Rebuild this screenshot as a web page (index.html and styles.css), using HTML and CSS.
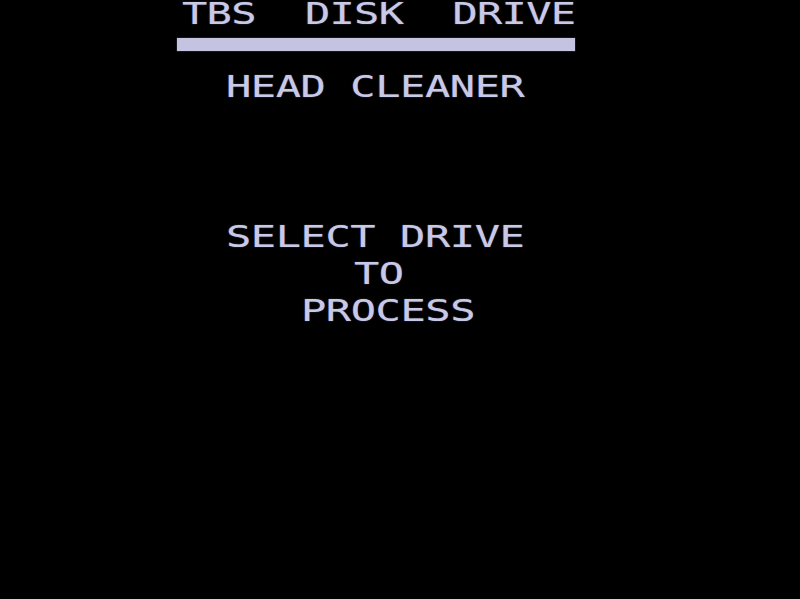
FILE: index.html
```html
<!DOCTYPE html>
<html>
<head>
<meta charset="utf-8">
<link rel="stylesheet" href="styles.css">
</head>
<body>
<div class="screen">
  <div class="line title"><span class="txt">TBS  DISK  DRIVE</span></div>
  <div class="bar"></div>
  <div class="line row head"><span class="txt">HEAD CLEANER</span></div>
  <div class="line row select"><span class="txt">SELECT DRIVE</span></div>
  <div class="line row to"><span class="txt">TO</span></div>
  <div class="line row process"><span class="txt">PROCESS</span></div>
</div>
</body>
</html>
```
FILE: styles.css
```css
html, body {
  margin: 0;
  padding: 0;
  background: #000;
}
.screen {
  width: 800px;
  height: 599px;
  background: #000;
  overflow: hidden;
  font-family: "DejaVu Sans Mono", monospace;
  font-size: 30px;
  color: #c8c8e8;
}
.line {
  white-space: pre;
}
.txt {
  display: inline-block;
  transform: scaleX(1.4);
  transform-origin: left center;
  letter-spacing: -0.3px;
  text-shadow: 0 0 1px rgba(200, 200, 232, 0.6);
}
.title {
  line-height: 27px;
  height: 27px;
  padding-left: 182px;
}
.title .txt {
  letter-spacing: -0.5px;
}
.bar {
  margin-top: 11px;
  margin-left: 177px;
  width: 398px;
  height: 13px;
  background: #c4c4e2;
  box-shadow: 0 0 1px rgba(196, 196, 226, 0.7);
}
.row {
  line-height: 37px;
  height: 37px;
}
.head {
  margin-top: 17px;
  padding-left: 226px;
}
.select {
  margin-top: 113px;
  padding-left: 226px;
}
.to {
  padding-left: 354px;
}
.process {
  padding-left: 301px;
}
```
